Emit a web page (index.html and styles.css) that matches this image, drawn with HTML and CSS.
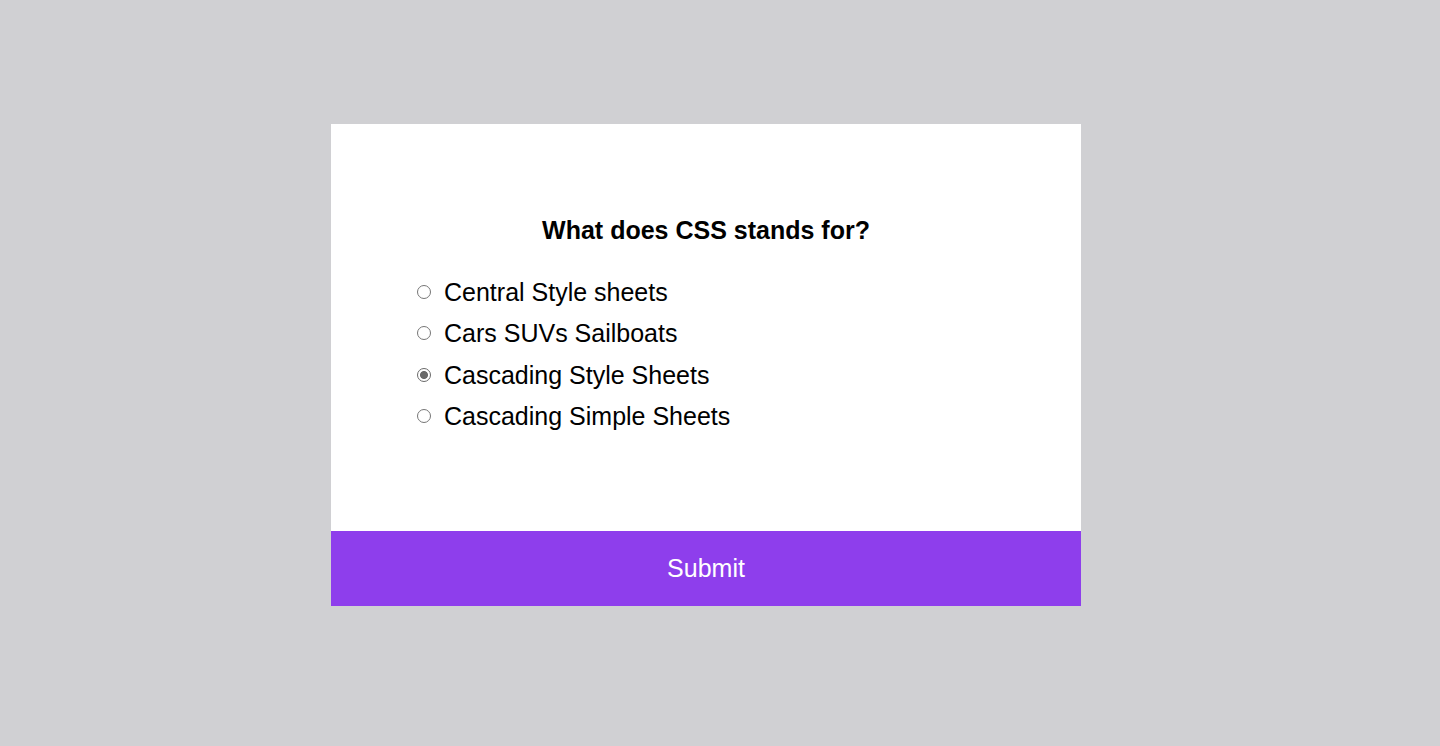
FILE: index.html
```
<!DOCTYPE html>
<html lang="en">
<head>
<meta charset="utf-8">
<title>Quiz</title>
<link rel="stylesheet" href="styles.css">
</head>
<body>
<div class="page">
  <div class="quiz">
    <div class="quiz-header">
      <h2 class="question">What does CSS stands for?</h2>
      <ul class="answers">
        <li class="answer"><label class="answer-label"><input class="radio" type="radio" name="a"><span>Central Style sheets</span></label></li>
        <li class="answer"><label class="answer-label"><input class="radio" type="radio" name="a"><span>Cars SUVs Sailboats</span></label></li>
        <li class="answer"><label class="answer-label"><input class="radio" type="radio" name="a" checked><span>Cascading Style Sheets</span></label></li>
        <li class="answer"><label class="answer-label"><input class="radio" type="radio" name="a"><span>Cascading Simple Sheets</span></label></li>
      </ul>
    </div>
    <button class="submit" type="button">Submit</button>
  </div>
</div>
</body>
</html>
```
FILE: styles.css
```
html, body {
  margin: 0;
  padding: 0;
}
body {
  background: #d0d0d3;
  font-family: "Liberation Sans", Arial, sans-serif;
}
.page {
  height: 746px;
  display: flex;
  justify-content: center;
  align-items: flex-start;
  padding: 124px 28px 0 0;
  box-sizing: border-box;
}
.quiz {
  width: 750px;
  background: #fff;
  overflow: hidden;
}
.quiz-header {
  padding: 80px 85px 80px 85px;
  height: 407px;
  box-sizing: border-box;
}
.question {
  margin: 0;
  padding: 12px 0 0;
  text-align: center;
  font-size: 25px;
  font-weight: bold;
  line-height: 28px;
  color: #000;
}
.answers {
  list-style: none;
  margin: 0;
  padding: 33.5px 0 0;
  display: flex;
  flex-direction: column;
  gap: 13.5px;
}
.answer {
  font-size: 25px;
  line-height: 28px;
  color: #000;
}
.answer-label {
  display: flex;
  align-items: center;
  gap: 13px;
}
.radio {
  appearance: none;
  -webkit-appearance: none;
  margin: 0 0 0 1px;
  width: 14px;
  height: 14px;
  border: 1px solid #767676;
  border-radius: 50%;
  box-sizing: border-box;
  background: #fff;
}
.radio:checked {
  border-color: #6a6a6a;
  background: radial-gradient(circle, #6a6a6a 0 3.6px, #fff 4.4px);
}
.submit {
  display: block;
  width: 100%;
  height: 75px;
  border: none;
  margin: 0;
  background: #8e3eec;
  color: #fff;
  font-family: "Liberation Sans", Arial, sans-serif;
  font-size: 25px;
}
```
